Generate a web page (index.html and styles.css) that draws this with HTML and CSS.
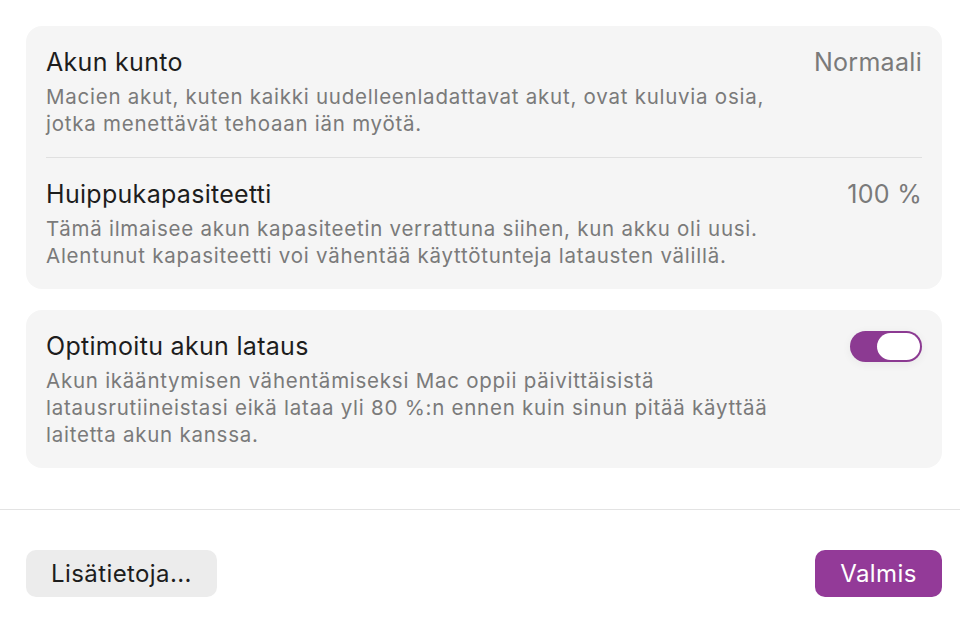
FILE: index.html
```html
<!DOCTYPE html>
<html lang="fi">
<head>
<meta charset="utf-8">
<link rel="stylesheet" href="styles.css">
</head>
<body>
<div class="sheet">
  <div class="content">
    <section class="card">
      <div class="row">
        <div class="text">
          <div class="title">Akun kunto</div>
          <div class="desc">Macien akut, kuten kaikki uudelleenladattavat akut, ovat kuluvia osia,<br>jotka menettävät tehoaan iän myötä.</div>
        </div>
        <div class="value">Normaali</div>
      </div>
      <div class="divider"></div>
      <div class="row">
        <div class="text">
          <div class="title">Huippukapasiteetti</div>
          <div class="desc">Tämä ilmaisee akun kapasiteetin verrattuna siihen, kun akku oli uusi.<br>Alentunut kapasiteetti voi vähentää käyttötunteja latausten välillä.</div>
        </div>
        <div class="value">100 %</div>
      </div>
    </section>
    <section class="card">
      <div class="row">
        <div class="text">
          <div class="title">Optimoitu akun lataus</div>
          <div class="desc">Akun ikääntymisen vähentämiseksi Mac oppii päivittäisistä<br>latausrutiineistasi eikä lataa yli 80 %:n ennen kuin sinun pitää käyttää<br>laitetta akun kanssa.</div>
        </div>
        <div class="toggle"><span class="knob"></span></div>
      </div>
    </section>
  </div>
  <footer class="footer">
    <button class="btn">Lisätietoja...</button>
    <button class="btn primary">Valmis</button>
  </footer>
</div>
</body>
</html>
```
FILE: styles.css
```css
html, body {
  margin: 0;
  padding: 0;
  background: #ffffff;
}
body {
  font-family: Inter, "Noto Sans", "Liberation Sans", sans-serif;
  width: 960px;
  height: 623px;
  overflow: hidden;
}
.content {
  padding: 26px 18px 0 26px;
  display: flex;
  flex-direction: column;
  gap: 21px;
}
.card {
  background: #f5f5f5;
  border-radius: 16px;
  padding: 0 20px;
}
.row {
  display: flex;
  justify-content: space-between;
  align-items: flex-start;
  padding: 20px 0 20px;
}
.title {
  font-size: 25px;
  line-height: 32px;
  color: #1d1d1d;
  letter-spacing: 0.3px;
}
.desc {
  font-size: 20.5px;
  line-height: 27px;
  color: #7a7a7a;
  margin-top: 5px;
  letter-spacing: 0.75px;
}
.value {
  font-size: 25px;
  line-height: 32px;
  color: #7a7a7a;
  letter-spacing: 0.3px;
}
.divider {
  height: 1px;
  background: #e0e0e0;
}
.toggle {
  width: 72px;
  height: 31px;
  border-radius: 16px;
  background: #8c3a92;
  display: flex;
  align-items: center;
  justify-content: flex-end;
  padding: 0 2px;
  box-sizing: border-box;
  margin-top: 1px;
  box-shadow: 0 2px 10px rgba(0,0,0,0.06);
}
.knob {
  width: 43px;
  height: 27px;
  border-radius: 14px;
  background: #ffffff;
}
.footer {
  margin-top: 41px;
  border-top: 1px solid #e3e3e3;
  padding: 40px 18px 0 26px;
  display: flex;
  justify-content: space-between;
}
.btn {
  font-family: Inter, "Noto Sans", "Liberation Sans", sans-serif;
  font-size: 24px;
  letter-spacing: 0.4px;
  height: 47px;
  border: none;
  border-radius: 10px;
  background: #ececec;
  color: #1d1d1d;
  padding: 0;
  width: 191px;
}
.btn.primary {
  background: #933a98;
  color: #ffffff;
  width: 127px;
}
```
